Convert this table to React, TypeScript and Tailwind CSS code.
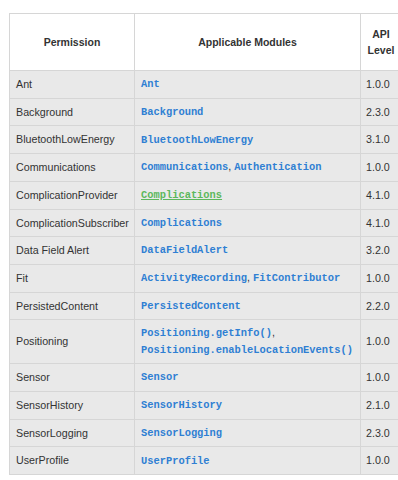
type Mod = { name: string; visited?: boolean };
type Row = { permission: string; modules: Mod[]; stacked?: boolean; level: string };

const rows: Row[] = [
    { permission: "Ant", modules: [{ name: "Ant" }], level: "1.0.0" },
    { permission: "Background", modules: [{ name: "Background" }], level: "2.3.0" },
    { permission: "BluetoothLowEnergy", modules: [{ name: "BluetoothLowEnergy" }], level: "3.1.0" },
    { permission: "Communications", modules: [{ name: "Communications" }, { name: "Authentication" }], level: "1.0.0" },
    { permission: "ComplicationProvider", modules: [{ name: "Complications", visited: true }], level: "4.1.0" },
    { permission: "ComplicationSubscriber", modules: [{ name: "Complications" }], level: "4.1.0" },
    { permission: "Data Field Alert", modules: [{ name: "DataFieldAlert" }], level: "3.2.0" },
    { permission: "Fit", modules: [{ name: "ActivityRecording" }, { name: "FitContributor" }], level: "1.0.0" },
    { permission: "PersistedContent", modules: [{ name: "PersistedContent" }], level: "2.2.0" },
    {
        permission: "Positioning",
        modules: [{ name: "Positioning.getInfo()" }, { name: "Positioning.enableLocationEvents()" }],
        stacked: true,
        level: "1.0.0",
    },
    { permission: "Sensor", modules: [{ name: "Sensor" }], level: "1.0.0" },
    { permission: "SensorHistory", modules: [{ name: "SensorHistory" }], level: "2.1.0" },
    { permission: "SensorLogging", modules: [{ name: "SensorLogging" }], level: "2.3.0" },
    { permission: "UserProfile", modules: [{ name: "UserProfile" }], level: "1.0.0" },
];

const cell = "border border-[#d6d6d6] px-[6px] py-[5px] align-middle";
const head = "border border-[#d6d6d6] px-[6px] py-[11.5px] text-center font-bold text-[10.5px] leading-[16.5px]";

function ModuleLink({ mod }: { mod: Mod }) {
    return (
        <a
            href="#"
            className={`font-['Liberation_Mono','Courier_New',monospace] font-bold
                ${mod.visited ? "text-[#5cb85c] underline" : "text-[#2f7fd3] no-underline"}`}
        >
            {mod.name}
        </a>
    );
}

export default function App() {
    return (
        <div className="w-[398px] h-[480px] bg-white overflow-hidden pt-[13px] pl-[9px] font-['Liberation_Sans',Arial,sans-serif] text-[10.7px] leading-[16.7px] text-[#333333]">
            <table className="border-collapse w-[392px] table-fixed">
                <colgroup>
                    <col className="w-[125px]" />
                    <col className="w-[226px]" />
                    <col className="w-[41px]" />
                </colgroup>
                <thead>
                    <tr className="bg-white">
                        <th className={head}>Permission</th>
                        <th className={head}>Applicable Modules</th>
                        <th className={head}>
                            API
                            <br />
                            Level
                        </th>
                    </tr>
                </thead>
                <tbody>
                    {rows.map(r => (
                        <tr key={r.permission} className="bg-[#e9e9e9]">
                            <td className={cell}>{r.permission}</td>
                            <td className={`${cell} text-[10.4px] leading-[15.5px]`}>
                                {r.modules.map((m, i) => (
                                    <span key={m.name}>
                                        {i > 0 && (r.stacked ? <br /> : null)}
                                        <ModuleLink mod={m} />
                                        {i < r.modules.length - 1 && (
                                            <span className="font-['Liberation_Sans',Arial,sans-serif] text-[10.7px]">, </span>
                                        )}
                                    </span>
                                ))}
                            </td>
                            <td className={`${cell} pl-[5px]`}>{r.level}</td>
                        </tr>
                    ))}
                </tbody>
            </table>
        </div>
    );
}
